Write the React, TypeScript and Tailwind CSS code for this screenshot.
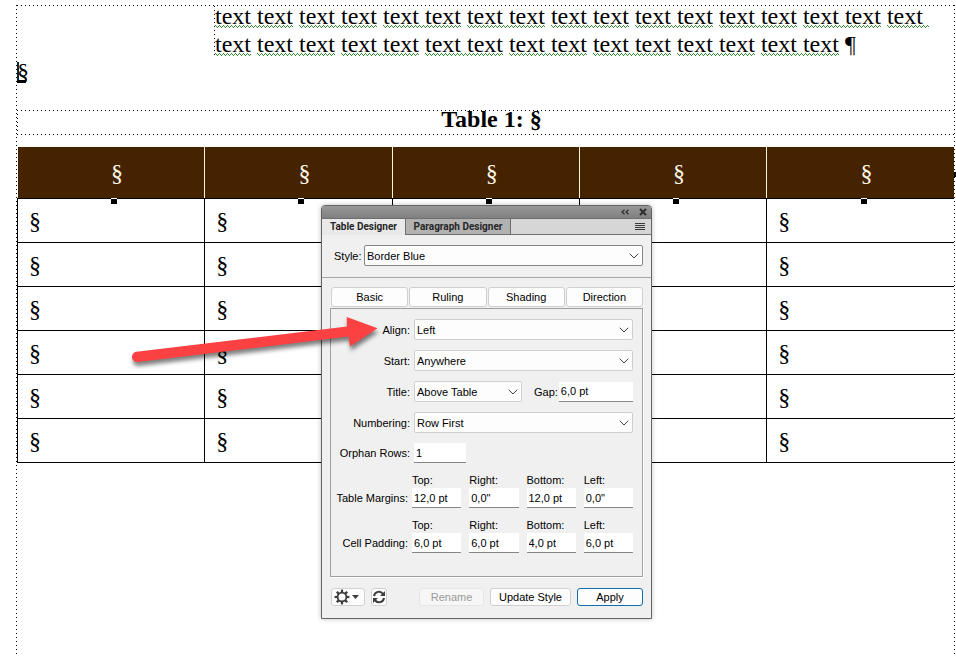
import React from "react";
import type { ReactNode } from "react";
import { ChevronDown } from "lucide-react";

const DOTS_X = "h-px bg-[repeating-linear-gradient(to_right,#000_0_1px,transparent_1px_4px)]";
const DOTS_Y = "w-px bg-[repeating-linear-gradient(to_bottom,#000_0_1px,transparent_1px_4px)]";

function Checked({ children }: { children: ReactNode }) {
  return (
    <span className="relative inline-block h-7 align-top">
      {children}
      <svg className="absolute bottom-[2px] left-0 h-[3px] w-full" aria-hidden="true">
        <rect width="100%" height="3" fill="url(#squiggle)" />
      </svg>
    </span>
  );
}

function BodyText() {
  const first = Array.from({ length: 8 }, (_, i) => i);
  const second = Array.from({ length: 7 }, (_, i) => i);
  return (
    <p className="min-w-0 flex-1 whitespace-nowrap">
      <span className="block h-7 whitespace-pre">
        {first.map((i) => (
          <React.Fragment key={i}>
            <Checked>text text</Checked>{" "}
          </React.Fragment>
        ))}
        <Checked>{"text "}</Checked>
      </span>
      <span className="block h-7">
        <Checked>text</Checked>{" "}
        {second.map((i) => (
          <React.Fragment key={i}>
            <Checked>text text</Checked>{" "}
          </React.Fragment>
        ))}
        ¶
      </span>
    </p>
  );
}

const COLUMNS = [1, 2, 3, 4, 5];
const ROWS = [1, 2, 3, 4, 5, 6];

function DocumentTable() {
  return (
    <table className="w-full table-fixed border-collapse">
      <thead>
        <tr className="h-[51px] bg-[#452300] text-[#fff8e6]">
          {COLUMNS.map((c) => (
            <th
              key={c}
              className="relative border-r border-b border-r-[#fff5dc] border-b-black pt-[2px] pl-3 text-center font-normal last:border-r-0"
            >
              §
              <span className="absolute -bottom-[6px] left-1/2 h-[6px] w-[6px] border-t border-white bg-black" />
              {c === COLUMNS.length && <span className="absolute top-1/2 -right-[2px] h-[5px] w-[2px] bg-black" />}
            </th>
          ))}
        </tr>
      </thead>
      <tbody>
        {ROWS.map((r) => (
          <tr key={r} className="h-11">
            {COLUMNS.map((c) => (
              <td key={c} className="border border-black pt-[2px] pl-[11px] last:border-r-0">
                §
              </td>
            ))}
          </tr>
        ))}
      </tbody>
    </table>
  );
}

type SelectProps = { id: string; value: string; className?: string; strong?: boolean };

function Select({ id, value, className = "", strong = false }: SelectProps) {
  return (
    <span className={`relative block h-[21px] ${className}`}>
      <select
        id={id}
        defaultValue={value}
        className={`block h-full w-full appearance-none rounded-[2px] border bg-[#fdfdfd] pr-5 pl-[2px] outline-none ${
          strong ? "border-[#868686]" : "border-[#cfcfcf]"
        }`}
      >
        <option>{value}</option>
      </select>
      <ChevronDown
        className="pointer-events-none absolute top-[3px] right-px h-4 w-4 text-[#444]"
        strokeWidth={1.5}
      />
    </span>
  );
}

function Field({ id, value, className = "" }: { id: string; value: string; className?: string }) {
  return (
    <input
      id={id}
      type="text"
      defaultValue={value}
      className={`block h-5 border-b border-[#868686] bg-white px-[2px] outline-none ${className}`}
    />
  );
}

function Row({ id, label, children }: { id: string; label: string; children: ReactNode }) {
  return (
    <div className="flex items-center gap-1">
      <label htmlFor={id} className="w-[79px] shrink-0 text-right whitespace-nowrap">
        {label}
      </label>
      {children}
    </div>
  );
}

function QuadRow({ name, label, values }: { name: string; label: string; values: string[] }) {
  const sides = ["Top:", "Right:", "Bottom:", "Left:"];
  return (
    <fieldset className="flex items-end gap-1">
      <span className="w-[77px] shrink-0 text-right leading-5 whitespace-nowrap">{label}</span>
      <div className="grid flex-1 grid-cols-4 gap-2">
        {sides.map((side, i) => (
          <div key={side}>
            <label htmlFor={`${name}-${i}`} className="block leading-4">
              {side}
            </label>
            <Field id={`${name}-${i}`} value={values[i]} className="w-full" />
          </div>
        ))}
      </div>
    </fieldset>
  );
}

function GearIcon() {
  const teeth = [0, 45, 90, 135, 180, 225, 270, 315];
  return (
    <svg viewBox="0 0 16 16" className="h-4 w-4" aria-hidden="true">
      {teeth.map((a) => (
        <rect key={a} x="6.9" y="0.6" width="2.2" height="3" fill="#3c3c3c" transform={`rotate(${a} 8 8)`} />
      ))}
      <circle cx="8" cy="8" r="4.4" fill="none" stroke="#3c3c3c" strokeWidth="1.8" />
    </svg>
  );
}

function RefreshIcon() {
  return (
    <svg viewBox="0 0 14 14" className="h-[14px] w-[14px]" fill="none" stroke="#3c3c3c" strokeWidth="2" aria-hidden="true">
      <path d="M2 6A5 5 0 0 1 11 3.8" />
      <path d="M12 8A5 5 0 0 1 3 10.2" />
      <path d="M13 1v5H8z" fill="#3c3c3c" stroke="none" />
      <path d="M1 13V8h5z" fill="#3c3c3c" stroke="none" />
    </svg>
  );
}

function DesignerPanel() {
  const button = "rounded-[3px] border border-[#d0d0d0] bg-[#fdfdfd]";
  return (
    <section
      aria-label="Table Designer"
      className="absolute top-[205px] left-[321px] w-[331px] rounded-t-[4px] border border-[#646464] bg-[#f0f0f0] font-['Liberation_Sans',Arial,sans-serif] text-[11px] leading-[14px] text-black shadow-[0_0_5px_rgba(0,0,0,0.25)]"
    >
      <header className="flex h-3 items-center justify-end gap-[10px] rounded-t-[3px] bg-linear-to-b from-[#989898] to-[#808080] pr-1">
        <button type="button" aria-label="Collapse" className="flex h-3 items-center">
          <svg viewBox="0 0 8 6" className="h-[6px] w-2" fill="none" stroke="#2e2e2e" strokeWidth="1.2">
            <path d="M3.5 .8 1 3l2.5 2.2M7.5 .8 5 3l2.5 2.2" />
          </svg>
        </button>
        <button type="button" aria-label="Close" className="flex h-3 items-center">
          <svg viewBox="0 0 8 8" className="h-2 w-2" fill="none" stroke="#2e2e2e" strokeWidth="2">
            <path d="M1 1l6 6M7 1 1 7" />
          </svg>
        </button>
      </header>
      <div
        role="tablist"
        className="flex h-[17px] border-t border-[#6e6e6e] bg-[#d6d6d6] font-[Roboto,sans-serif] text-[10px] font-bold text-[#262626]"
      >
        <button type="button" role="tab" aria-selected="true" className="w-[83px] bg-[#e9e9e9] whitespace-nowrap">
          Table Designer
        </button>
        <button
          type="button"
          role="tab"
          aria-selected="false"
          className="w-[106px] border-x border-b border-[#6e6e6e] bg-[#b2b2b2] whitespace-nowrap"
        >
          Paragraph Designer
        </button>
        <div className="flex flex-1 items-center justify-end border-b border-[#6e6e6e] pr-[6px]">
          <button type="button" aria-label="Panel menu">
            <svg viewBox="0 0 10 7" className="h-[7px] w-[10px]" stroke="#3a3a3a" shapeRendering="crispEdges">
              <path d="M0 .5h10M0 2.5h10M0 4.5h10M0 6.5h10" />
            </svg>
          </button>
        </div>
      </div>

      <div className="flex items-center gap-1 border-b border-[#a5a5a5] pt-[10px] pr-2 pb-[11px] pl-3">
        <label htmlFor="style" className="w-[26px]">
          Style:
        </label>
        <Select id="style" value="Border Blue" strong className="flex-1" />
      </div>

      <div className="px-2 pt-[9px] pb-3">
        <div className="grid grid-cols-4 gap-px pl-px">
          {["Basic", "Ruling", "Shading", "Direction"].map((name) => (
            <button key={name} type="button" className={`h-5 ${button}`}>
              {name}
            </button>
          ))}
        </div>

        <div className="mt-px border border-[#a0a0a0] pt-[10px] pr-[9px] pb-[23px] pl-0 shadow-[1px_1px_0_#fff]">
          <div className="flex flex-col gap-[10px]">
            <Row id="align" label="Align:">
              <Select id="align" value="Left" className="flex-1" />
            </Row>
            <Row id="start" label="Start:">
              <Select id="start" value="Anywhere" className="flex-1" />
            </Row>
            <Row id="title" label="Title:">
              <Select id="title" value="Above Table" className="w-[108px]" />
              <div className="flex flex-1 items-center gap-px pl-2">
                <label htmlFor="gap">Gap:</label>
                <Field id="gap" value="6,0 pt" className="w-0 flex-1" />
              </div>
            </Row>
            <Row id="numbering" label="Numbering:">
              <Select id="numbering" value="Row First" className="flex-1" />
            </Row>
            <Row id="orphan" label="Orphan Rows:">
              <Field id="orphan" value="1" className="w-[52px]" />
            </Row>
          </div>
          <div className="mt-[9px] flex flex-col gap-[9px]">
            <QuadRow name="margin" label="Table Margins:" values={["12,0 pt", '0,0"', "12,0 pt", '0,0"']} />
            <QuadRow name="padding" label="Cell Padding:" values={["6,0 pt", "6,0 pt", "4,0 pt", "6,0 pt"]} />
          </div>
        </div>

        <div className="mt-[11px] flex items-center pl-px">
          <button type="button" aria-label="Options" className={`flex h-[18px] w-[34px] items-center gap-[2px] pl-[2px] ${button}`}>
            <GearIcon />
            <svg viewBox="0 0 7 4" className="h-1 w-[7px]" fill="#3c3c3c">
              <path d="M0 0h7L3.5 4z" />
            </svg>
          </button>
          <button type="button" aria-label="Refresh" className={`ml-[6px] flex h-[18px] w-4 items-center justify-center ${button}`}>
            <RefreshIcon />
          </button>
          <div className="ml-auto flex gap-[6px]">
            <button type="button" disabled className="h-[18px] w-[65px] rounded-[3px] border border-[#e6e6e6] bg-[#f6f6f6] leading-4 text-[#9a9a9a]">
              Rename
            </button>
            <button type="button" className={`h-[18px] w-[81px] leading-4 ${button}`}>
              Update Style
            </button>
            <button type="button" className="h-[18px] w-[66px] rounded-[3px] border border-[#0f6cae] bg-[#fdfdfd] leading-4">
              Apply
            </button>
          </div>
        </div>
      </div>
    </section>
  );
}

function PointerArrow() {
  return (
    <svg
      viewBox="0 0 260 50"
      className="pointer-events-none absolute top-[312px] left-[126px] h-[50px] w-[260px] overflow-visible drop-shadow-[1px_4px_2px_rgba(0,0,0,0.5)]"
      aria-hidden="true"
    >
      <path d="M10.500 39.800 221 14.600 220.700 5 251.500 16.200 224 34.500 222.500 24.500 11.700 50A5 5 0 0 1 10.500 39.800Z" fill="#fb4141" />
    </svg>
  );
}

export default function App() {
  return (
    <main className="relative min-h-screen overflow-hidden bg-white font-['Liberation_Serif','Times_New_Roman',serif] text-2xl leading-7 text-black">
      <svg className="absolute h-0 w-0" aria-hidden="true">
        <defs>
          <pattern id="squiggle" width="4" height="3" patternUnits="userSpaceOnUse">
            <path d="M0 0h1v1H0zM1 1h1v1H1zM2 2h1v1H2zM3 1h1v1H3z" fill="#2f8a2f" shapeRendering="crispEdges" />
          </pattern>
        </defs>
      </svg>
      <div className="flex min-h-screen pt-[5px] pr-px pl-4">
        <div className={DOTS_Y} />
        <div className="min-w-0 flex-1">
          <div className={DOTS_X} />
          <div className="-mt-1 flex pl-[197px]">
            <div className={`mt-1 ${DOTS_Y}`} />
            <BodyText />
          </div>
          <p className="flex">
            <span className="relative">
              §
              <span className="absolute top-1 left-0 h-5 w-[2px] bg-[#0a2a3a]" />
              <span className="absolute bottom-[3px] left-0 h-[3px] w-[9px] bg-black" />
            </span>
          </p>
          <div className="mt-6 flex gap-[3px]">
            <div className={DOTS_Y} />
            <div className="flex-1">
              <div className={DOTS_X} />
              <h1 className="-mt-[6px] mb-px pl-2 text-center font-bold">Table 1: §</h1>
              <div className={DOTS_X} />
            </div>
          </div>
          <div className="mt-3">
            <DocumentTable />
          </div>
        </div>
        <div className={DOTS_Y} />
      </div>
      <DesignerPanel />
      <PointerArrow />
    </main>
  );
}
